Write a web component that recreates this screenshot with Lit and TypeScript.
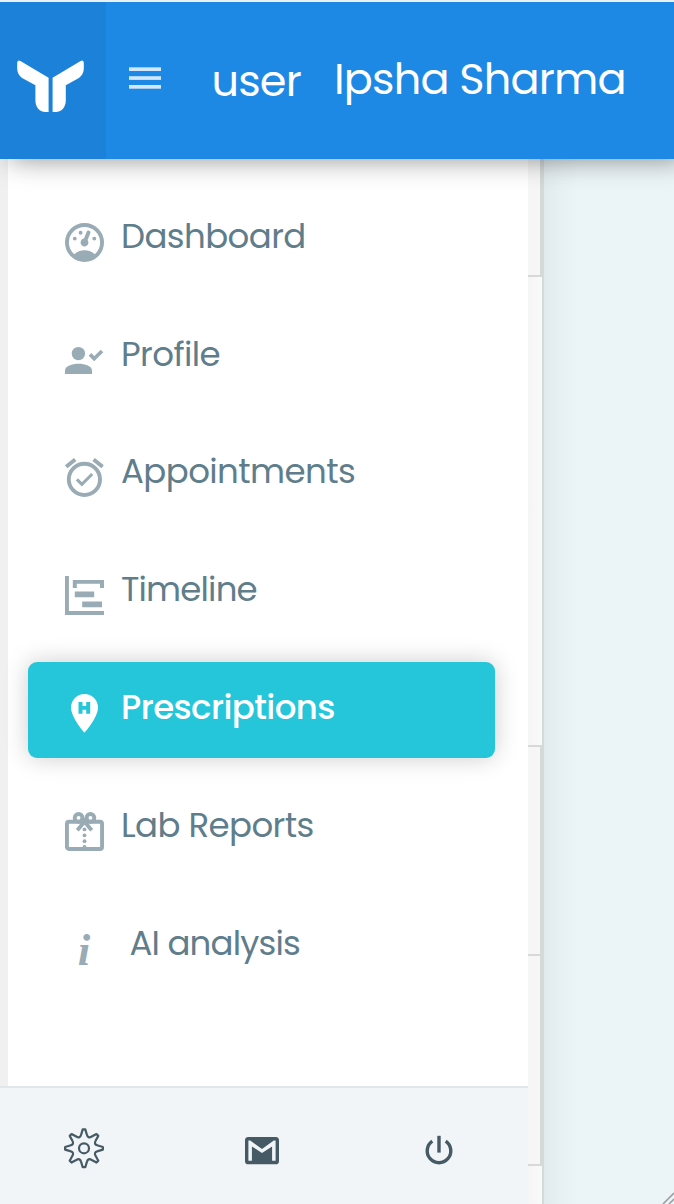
import { LitElement, html, svg, css, TemplateResult } from "lit";
import { customElement } from "lit/decorators.js";
import { classMap } from "lit/directives/class-map.js";

interface NavItem {
  label: string;
  icon: TemplateResult;
  active?: boolean;
  indented?: boolean;
  tight?: boolean;
}

const dashboardIcon = svg`<svg class="icon" viewBox="2 2 20.5 20.5"><path fill="currentColor" d="M12,2A10,10 0 0,0 2,12A10,10 0 0,0 12,22A10,10 0 0,0 22,12A10,10 0 0,0 12,2M12,4A8,8 0 0,1 20,12C20,14.4 19,16.5 17.3,18C15.9,16.7 14,16 12,16C10,16 8.2,16.7 6.7,18C5,16.5 4,14.4 4,12A8,8 0 0,1 12,4M14,5.89C13.62,5.9 13.26,6.15 13.1,6.54L11.81,9.77L11.71,10C11,10.13 10.41,10.6 10.14,11.26C9.73,12.29 10.23,13.45 11.26,13.86C12.29,14.27 13.45,13.77 13.86,12.74C14.12,12.08 14,11.32 13.57,10.76L13.67,10.5L14.96,7.29L14.97,7.26C15.17,6.75 14.92,6.17 14.41,5.96C14.28,5.91 14.15,5.89 14,5.89M10,6A1,1 0 0,0 9,7A1,1 0 0,0 10,8A1,1 0 0,0 11,7A1,1 0 0,0 10,6M7,9A1,1 0 0,0 6,10A1,1 0 0,0 7,11A1,1 0 0,0 8,10A1,1 0 0,0 7,9M17,9A1,1 0 0,0 16,10A1,1 0 0,0 17,11A1,1 0 0,0 18,10A1,1 0 0,0 17,9Z"/></svg>`;

const profileIcon = svg`<svg class="icon" viewBox="0 0 40 40">
  <circle cx="13.4" cy="12.6" r="6.7" fill="currentColor"/>
  <path fill="currentColor" d="M0 33V29.5C0 25 7 22.7 13.5 22.7S27 25 27 29.5V33Z"/>
  <path fill="none" stroke="currentColor" stroke-width="3.7" d="M25 13.4L29.2 17.7L37 10"/>
</svg>`;

const appointmentsIcon = svg`<svg class="icon" viewBox="0 0 40 40">
  <g fill="none" stroke="currentColor">
    <circle cx="19.4" cy="20.4" r="15.6" stroke-width="3.9"/>
    <path stroke-width="3.9" d="M1.2 7.8L10.2 .4M37.6 7.8L28.6 .4"/>
    <path stroke-width="3" d="M11.9 20.4L16.9 25.4L27.2 15"/>
  </g>
</svg>`;

const timelineIcon = svg`<svg class="icon" viewBox="0 0 40 40">
  <path fill="currentColor" d="M0 -1H3.9V34H39V37.9H0ZM7.8 2.9H39V11H35V6.8H11.8V11H7.8ZM9.8 14.6H29.2V20.2H9.8ZM17.2 24.5H37V30.2H17.2Z"/>
</svg>`;

const prescriptionsIcon = svg`<svg class="icon" viewBox="0 0 40 40">
  <path fill="currentColor" fill-rule="evenodd" d="M19.5 -1A13.5 13.5 0 0 0 6 12.6C6 22.8 19.5 37.8 19.5 37.8S33 22.8 33 12.6A13.5 13.5 0 0 0 19.5 -1ZM13.5 7H17.5V11H21.2V7H25.2V18.7H21.2V14.8H17.5V18.7H13.5Z"/>
</svg>`;

const labIcon = svg`<svg class="icon" viewBox="0 0 40 40">
  <g fill="none" stroke="currentColor" stroke-width="3.9">
    <rect x="1.95" y="8.7" width="35.1" height="27.3" rx="2"/>
    <circle cx="13.6" cy="4.9" r="3.9"/>
    <circle cx="25.4" cy="4.9" r="3.9"/>
    <path d="M20.5 7.5L12.3 17.2M18.5 7.5L26.7 17.2"/>
  </g>
  <g fill="currentColor">
    <path d="M15 5H24L19.5 11Z"/>
    <circle cx="19.5" cy="16.4" r="1.9"/><circle cx="19.5" cy="22.3" r="1.9"/>
    <circle cx="19.5" cy="28.2" r="1.9"/><circle cx="19.5" cy="34" r="1.9"/>
  </g>
</svg>`;

const infoIcon = html`<span class="icon info">i</span>`;

const items: NavItem[] = [
  { label: "Dashboard", icon: dashboardIcon },
  { label: "Profile", icon: profileIcon },
  { label: "Appointments", icon: appointmentsIcon },
  { label: "Timeline", icon: timelineIcon, tight: true },
  { label: "Prescriptions", icon: prescriptionsIcon, active: true },
  { label: "Lab Reports", icon: labIcon },
  { label: "AI analysis", icon: infoIcon, indented: true, tight: true },
];

/** Eight-toothed outline centred on the origin. */
function gearPath(): string {
  const at = (x: number, y: number, k: number) => {
    const a = (k * Math.PI) / 4;
    const px = x * Math.cos(a) - y * Math.sin(a);
    const py = x * Math.sin(a) + y * Math.cos(a);
    return `${px.toFixed(2)} ${py.toFixed(2)}`;
  };
  let d = `M${at(-1.3, -18.9, 0)}`;
  for (let k = 0; k < 8; k++) {
    d += `L${at(1.3, -18.9, k)}L${at(2.8, -13.8, k)}`;
    d += `C${at(3.6, -10.8, k)} ${at(-3.6, -10.8, k + 1)} ${at(-2.8, -13.8, k + 1)}`;
    d += `L${at(-1.3, -18.9, k + 1)}`;
  }
  return d + "Z";
}

@customElement("app-root")
export class AppRoot extends LitElement {
  static styles = css`
    :host {
      display: flex;
      flex-direction: column;
      box-sizing: border-box;
      height: 1204px;
      padding-top: 2px;
      overflow: hidden;
      background: #e9f1f5;
      font-family: Poppins, Inter, "Open Sans", sans-serif;
      font-feature-settings: "cv11";
    }
    svg { display: block; overflow: visible; }
    header {
      display: flex;
      flex: none;
      height: 157px;
      position: relative;
      z-index: 2;
      background: #1e88e5;
      color: #fff;
      box-shadow: 10px 0 26px rgba(0, 0, 0, 0.45);
      clip-path: inset(0 0 -60px 0);
    }
    .brand {
      width: 106px;
      background: #1c81d9;
      box-sizing: border-box;
      padding: 56.5px 0 0 17px;
    }
    .menu { margin: 65px 0 0 23px; width: 32px; height: 23px; }
    .role, .name {
      font-size: 43px;
      line-height: 50px;
      letter-spacing: -0.8px;
      white-space: pre;
    }
    .role { margin: 53.5px 0 0 50.5px; width: 92px; }
    .name { margin: 51.5px 0 0 30.5px; }
    main { display: flex; flex: 1; min-height: 0; }
    .side { width: 528px; display: flex; flex-direction: column; }
    nav {
      flex: 1;
      background: #fff;
      border-left: 8px solid #f0f0f0;
      padding: 31px 33px 0 20px;
      display: flex;
      flex-direction: column;
      gap: 22px;
    }
    .item {
      display: flex;
      height: 96px;
      border-radius: 9px;
      color: #607d8b;
    }
    .icon {
      flex: none;
      width: 40px;
      height: 40px;
      margin: 33px 0 0 37px;
      color: #99abb4;
    }
    .info {
      font: italic bold 45px/39px "Liberation Serif", serif;
      text-align: center;
      text-indent: -2px;
    }
    .label {
      margin: 24.5px 0 0 16px;
      font-size: 34px;
      line-height: 40px;
      letter-spacing: -0.58px;
      white-space: pre;
    }
    .item:nth-child(-n + 2) .label { margin-top: 25.5px; }
    .tight .label { letter-spacing: -0.82px; }
    .indented .label { margin-left: 24.5px; }
    .active {
      background: #26c6da;
      color: #fff;
      box-shadow: 0 0 24px rgba(0, 0, 0, 0.2);
    }
    .active .icon { color: #fff; }
    .active .label { font-weight: 500; }
    footer {
      height: 118px;
      box-sizing: border-box;
      border-top: 2px solid #e0e6ea;
      background: #f1f5f8;
      display: flex;
      color: #455a64;
    }
    footer svg { flex: none; height: 40px; width: 40px; }
    .gear { margin: 40px 0 0 64px; }
    .mail { margin: 43px 0 0 138px; }
    .power { margin: 43px 0 0 137px; }
    .table {
      width: 14px;
      display: flex;
      flex-direction: column;
      background: linear-gradient(90deg, #f5f5f5, #fafafa);
    }
    .cell {
      box-sizing: border-box;
      border: 0 solid #d8d8d8;
      border-width: 0 2px 2px 0;
      background: #f6f6f6;
    }
    .first { height: 118px; }
    .second { height: 211px; margin-top: 468px; border-top-width: 2px; }
    .third { height: 210px; }
    .page {
      flex: 1;
      border-left: 2px solid #d3dadc;
      background: linear-gradient(90deg, #e1eaed 0, #e7f0f3 17px, #ebf4f7 34px);
      display: flex;
      align-items: flex-end;
      justify-content: flex-end;
    }
  `;

  render() {
    return html`
      <header>
        <div class="brand">
          <svg width="68" height="53" viewBox="0 0 68 53" fill="#fff">
            <path d="M3.4 2L31.6 18.8V53H28.5C22 53 18.4 47.5 18.4 41.5V26.2L6 19.5C1.5 16.8 .2 13 .2 9V3.5Q.8 .6 3.4 2Z"/>
            <path d="M63.6 2L35.6 18.8V53H38.7C45.2 53 48.8 47.5 48.8 41.5V26.2L61 19.5C65.5 16.8 66.8 13 66.8 9V3.5Q66.2 .6 63.6 2Z"/>
          </svg>
        </div>
        <svg class="menu" viewBox="0 0 32 23" fill="#d2e7fa">
          <rect y=".3" width="32" height="3.7"/>
          <rect y="9.2" width="32" height="3.7"/>
          <rect y="18" width="32" height="3.7"/>
        </svg>
        <span class="role">user</span>
        <span class="name">Ipsha Sharma</span>
      </header>
      <main>
        <div class="side">
          <nav>
            ${items.map(
              (it) => html`<a
                class=${classMap({ item: true, active: !!it.active, indented: !!it.indented, tight: !!it.tight })}
                >${it.icon}<span class="label">${it.label}</span></a
              >`
            )}
          </nav>
          <footer>
            <svg class="gear" viewBox="-20 -20.3 40 40" fill="none" stroke="currentColor" stroke-width="2.2" stroke-linejoin="round">
              <path d=${gearPath()}/>
              <circle r="5"/>
            </svg>
            <svg class="mail" viewBox="-3 -6 40 40">
              <rect y="0" width="34" height="27.3" rx="3.4" fill="currentColor"/>
              <path d="M3.4 23.8V3.6H5.2L17 12L28.8 3.6H30.6V23.8H27.1V9.4L17 16L6.9 9.4V23.8Z" fill="#f1f5f8"/>
            </svg>
            <svg class="power" viewBox="-20 -20 40 40" fill="none" stroke="currentColor" stroke-width="3.4">
              <path d="M0 -15.2V1.6"/>
              <path d="M-6.7 -9.8A11.8 11.8 0 1 0 6.7 -9.8"/>
            </svg>
          </footer>
        </div>
        <div class="table">
          <div class="cell first"></div>
          <div class="cell second"></div>
          <div class="cell third"></div>
        </div>
        <div class="page">
          <svg width="11" height="11" viewBox="0 0 11 11" stroke="#a0a0a4" stroke-width="1.6">
            <path d="M0 11L11 0M6 11L11 6"/>
          </svg>
        </div>
      </main>
    `;
  }
}
